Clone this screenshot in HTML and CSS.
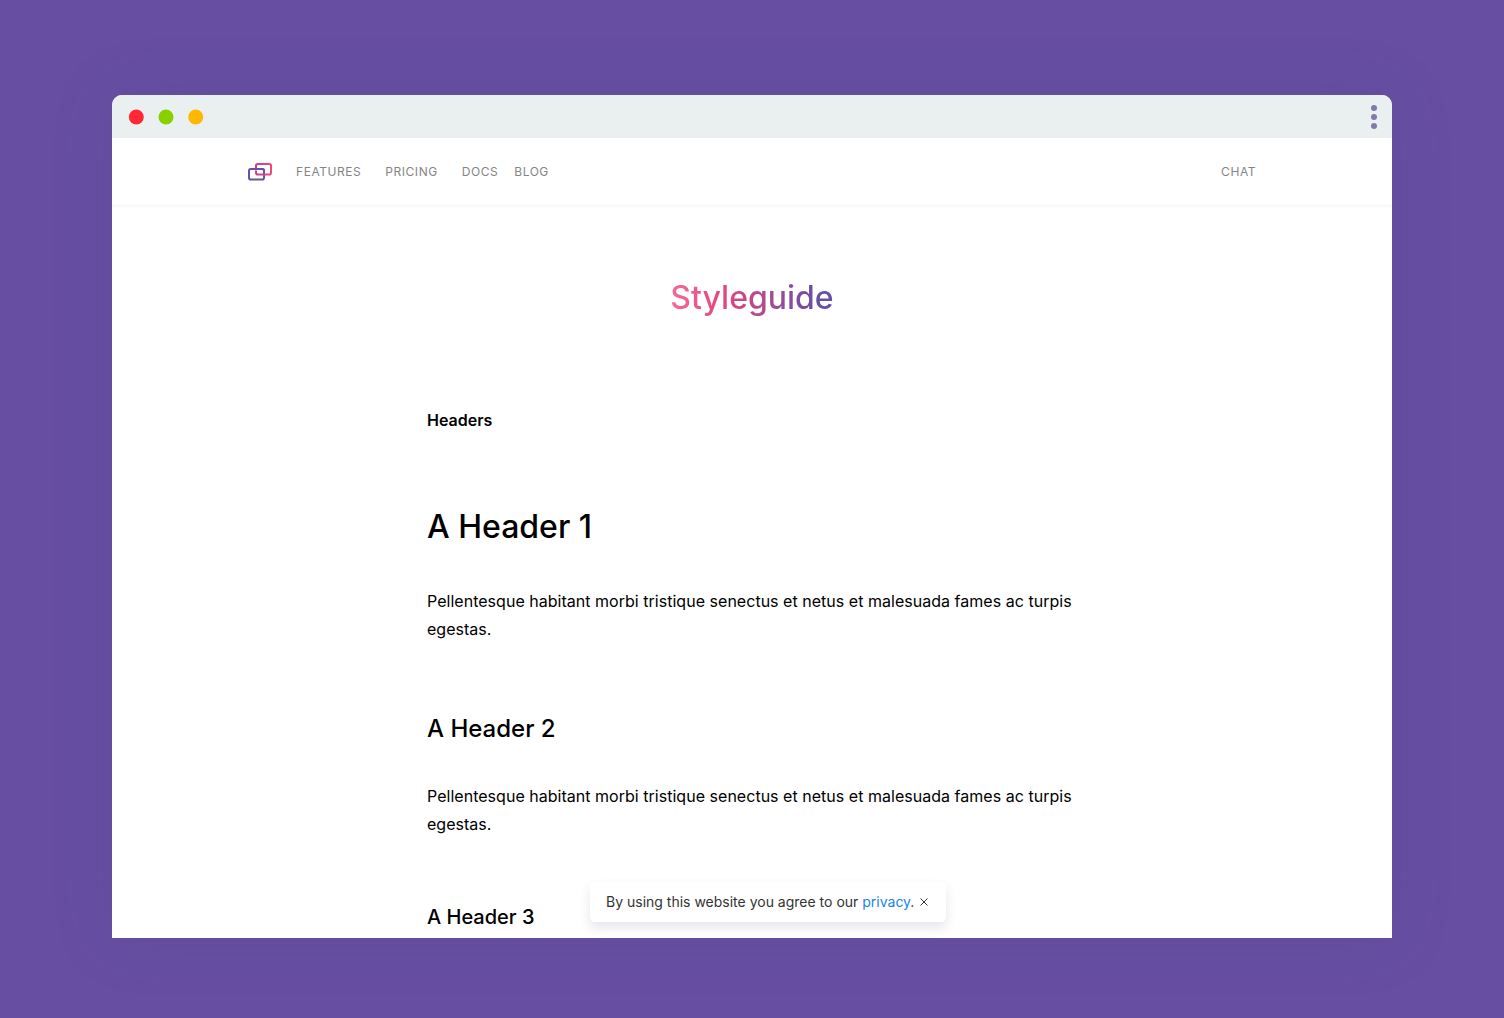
FILE: index.html
```html
<!DOCTYPE html>
<html lang="en">
<head>
<meta charset="utf-8">
<title>Styleguide</title>
<link rel="stylesheet" href="styles.css">
</head>
<body>
<div class="window">
  <div class="titlebar">
    <svg class="lights" width="76" height="16" viewBox="0 0 76 16" aria-hidden="true"><circle cx="8.300" cy="8" r="7.500" fill="#ff2836"/><circle cx="38" cy="8" r="7.500" fill="#88d000"/><circle cx="67.700" cy="8" r="7.500" fill="#ffb800"/></svg>
    <div class="dots"><span></span><span></span><span></span></div>
  </div>
  <header class="nav">
    <svg class="logo" width="24" height="18" viewBox="0 0 24 18" fill="none" stroke-width="2" aria-hidden="true">
      <defs>
        <linearGradient id="pink" x1="0" y1="0" x2="1" y2="0"><stop offset="0" stop-color="#c4408c"/><stop offset="1" stop-color="#ec4a78"/></linearGradient>
      </defs>
      <rect x="1" y="6" width="15" height="10.500" rx="1.800" stroke="#6650a8"/>
      <path d="M8 5V2.800Q8 1 9.800 1H21.200Q23 1 23 2.800V9.700Q23 11.500 21.200 11.500H9.800Q8 11.500 8 9.700V7.500" stroke="url(#pink)"/>
      <path d="M14.500 6Q16 6 16 7.700V10" stroke="#6650a8"/>
    </svg>
    <nav class="links"><a class="features">Features</a><a class="pricing">Pricing</a><a class="docs">Docs</a><a>Blog</a></nav>
    <a class="chat">Chat</a>
  </header>
  <main class="content">
    <h1 class="page-title"><span>Styleguide</span></h1>
    <div class="section-title">Headers</div>
    <h1 class="h1">A Header 1</h1>
    <p class="text">Pellentesque habitant morbi tristique senectus et netus et malesuada fames ac turpis egestas.</p>
    <h2 class="h2">A Header 2</h2>
    <p class="text">Pellentesque habitant morbi tristique senectus et netus et malesuada fames ac turpis egestas.</p>
    <h3 class="h3">A Header 3</h3>
  </main>
  <div class="toast">
    <span>By using this website you agree to our <a class="privacy">privacy</a>.</span>
    <svg class="close" width="8" height="8" viewBox="0 0 8 8" stroke="#333" stroke-width="1" aria-hidden="true"><path d="M.5 .5L7.500 7.500M7.500 .5L.5 7.500"/></svg>
  </div>
</div>
</body>
</html>
```
FILE: styles.css
```css
* { box-sizing: border-box; }
body {
  margin: 0;
  height: 1018px;
  padding: 95px 112px 80px;
  overflow: hidden;
  background: #674ea3;
  font-family: Inter, "Liberation Sans", sans-serif;
  color: #000;
}
.window {
  position: relative;
  height: 843px;
  overflow: hidden;
  border-radius: 10px 10px 0 0;
  background: #fff;
  box-shadow: 0 0 60px rgba(80, 75, 110, .2);
}
.titlebar {
  display: flex;
  justify-content: space-between;
  align-items: center;
  height: 43px;
  padding: 1px 15px 0 16px;
  background: #eaf0f0;
}
.dots { display: flex; flex-direction: column; gap: 3px; }
.dots span { width: 6px; height: 6px; border-radius: 50%; background: #8279aa; }
.nav {
  display: flex;
  align-items: center;
  height: 67px;
  padding: 0 136px;
  box-shadow: 0 1px 3px rgba(0, 0, 0, .05);
  color: #858585;
  font-size: 12px;
  letter-spacing: .55px;
  text-transform: uppercase;
}
.links { display: flex; margin-left: 24px; }
.features, .pricing { margin-right: 24px; }
.docs { margin-right: 16px; }
.chat { margin-left: auto; }
.content { width: 650px; margin: 0 auto; padding-top: 73px; }
h1, h2, h3, p { margin: 0; font-weight: 500; }
.page-title { text-align: center; font-size: 32px; line-height: 40px; }
.page-title span {
  background: linear-gradient(90deg, #f36c9b 0%, #e8467d 30%, #674ea7 90%);
  -webkit-background-clip: text;
  background-clip: text;
  color: transparent;
}
.section-title { margin-top: 88px; font-size: 16px; line-height: 28px; font-weight: 600; }
.h1 { margin-top: 73px; font-size: 32px; line-height: 40px; }
.text { margin-top: 40px; font-size: 16px; line-height: 28px; font-weight: 400; letter-spacing: .025px; }
.h2 { margin-top: 70px; font-size: 24px; line-height: 32px; }
.h2 + .text { margin-top: 37px; }
.h3 { margin-top: 65px; font-size: 20px; line-height: 28px; }
.toast {
  position: absolute;
  left: 478px;
  bottom: 16px;
  display: flex;
  align-items: center;
  gap: 6px;
  width: 356px;
  height: 40px;
  padding: 0 16px 1px;
  border-radius: 5px;
  background: #fff;
  box-shadow: 0 6px 12px rgba(50, 50, 93, .12);
  color: #333;
  font-size: 14px;
  white-space: nowrap;
}
.close { flex: none; }
.privacy { color: #1684ea; }
```
